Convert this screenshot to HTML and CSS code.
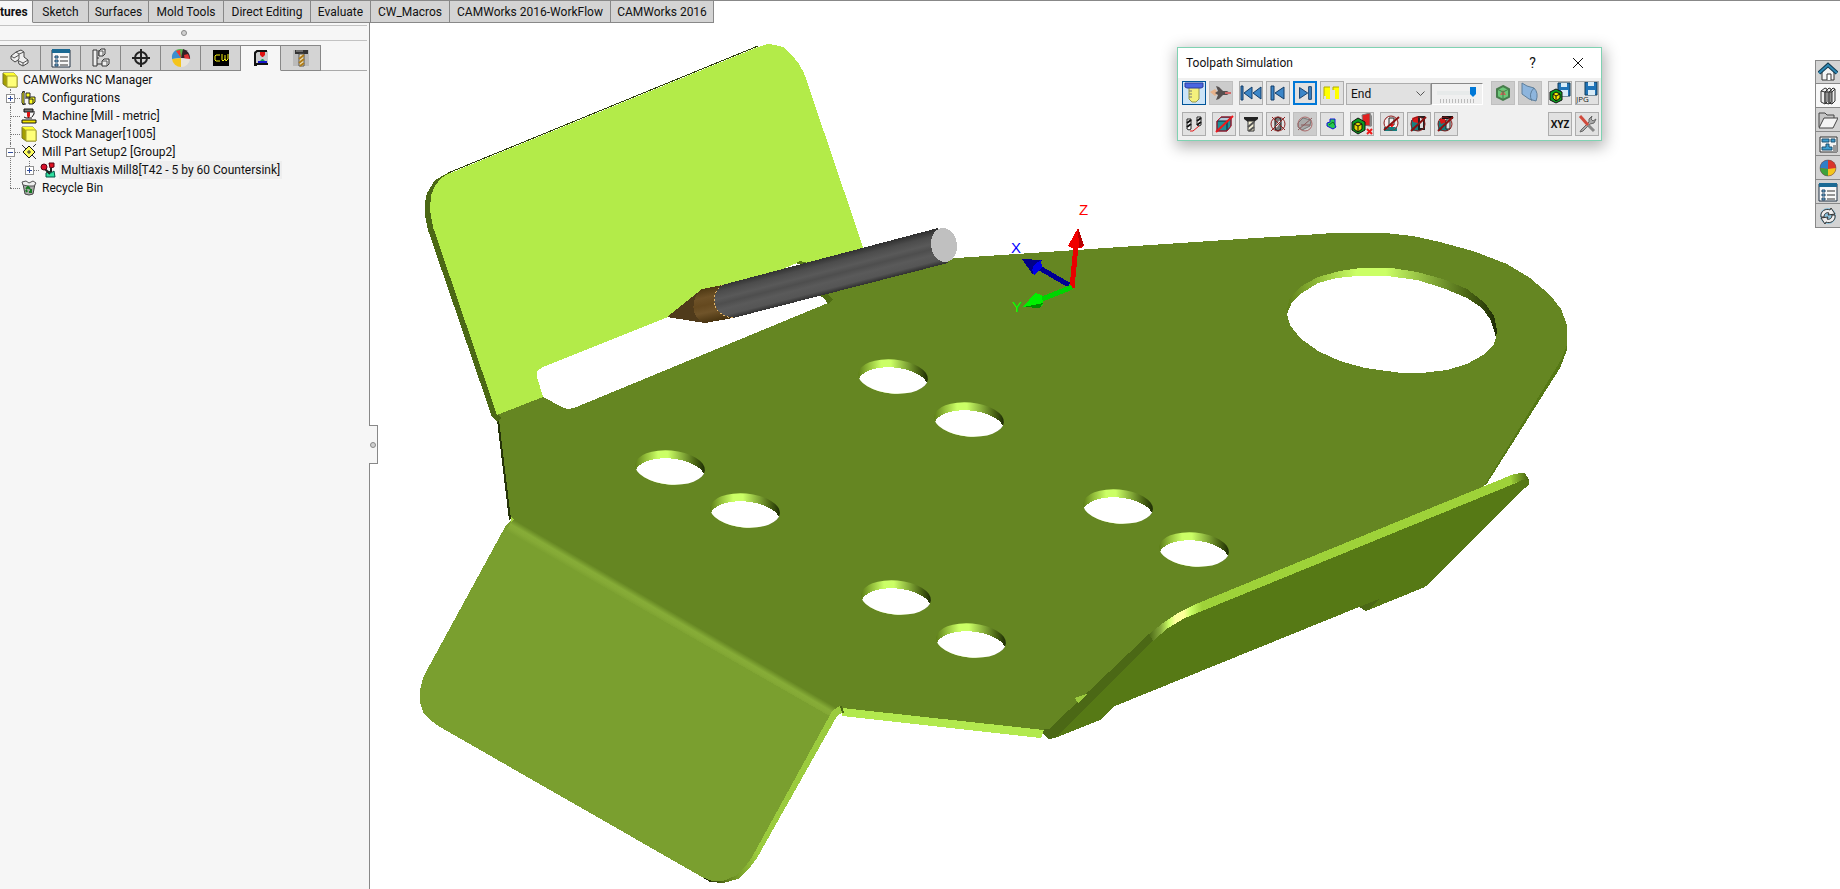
FILE: index.html
```html
<!DOCTYPE html>
<html lang="en">
<head>
<meta charset="utf-8">
<title>CAMWorks NC Manager</title>
<link rel="stylesheet" href="styles.css">
</head>
<body>
<div class="app">
  <nav class="ribbon" aria-label="Command tabs">
    <button class="ribbon-tab active">tures</button>
    <button class="ribbon-tab">Sketch</button>
    <button class="ribbon-tab">Surfaces</button>
    <button class="ribbon-tab">Mold Tools</button>
    <button class="ribbon-tab">Direct Editing</button>
    <button class="ribbon-tab">Evaluate</button>
    <button class="ribbon-tab">CW_Macros</button>
    <button class="ribbon-tab">CAMWorks 2016-WorkFlow</button>
    <button class="ribbon-tab">CAMWorks 2016</button>
  </nav>

  <div class="workspace">
    <aside class="manager">
      <div class="grip"><i class="dot"></i></div>
      <div class="manager-tabs">
        <button class="mtab" aria-label="Feature tree"><svg viewBox="0 0 20 20"><path d="M1 8 6 4 11 2 14 4V9L18 12V15L13 18 9 16 8 12 5 14 1 11Z" fill="#eee" stroke="#444"/><path d="M6 4 9 6V11L8 12M9 6 14 4M1 8 4 10 9 7M9 13 13 15 18 12M13 15V18" fill="none" stroke="#555"/></svg></button>
        <button class="mtab" aria-label="Properties"><svg viewBox="0 0 20 20"><path d="M1 2H19V19H1Z" fill="#f8f8f8" stroke="#234"/><path d="M1 1H19V5H1Z" fill="#1b6a94"/><path d="M4 8H7V10H4ZM4 12H7V14H4ZM4 16H7V18H4Z" fill="#7cc4e8" stroke="#246"/><path d="M9 9H17M9 13H17M9 17H17" stroke="#333"/></svg></button>
        <button class="mtab" aria-label="Configurations"><svg viewBox="0 0 20 20"><path d="M4 4V16H13M4 10H8M8 2V8" fill="none" stroke="#333"/><path d="M2 2H6V18H2ZM8 3 10 1H14V6L12 8H8ZM11 13 13 11H18V16L16 18H11Z" fill="#eee" stroke="#333"/><path d="M8 3H12V8M11 13H16V18" fill="none" stroke="#555"/></svg></button>
        <button class="mtab" aria-label="Dimensions"><svg viewBox="0 0 20 20"><circle cx="10" cy="10" r="6" fill="none" stroke="#222" stroke-width="2"/><path d="M10 1V19M1 10H19" stroke="#222" stroke-width="2"/></svg></button>
        <button class="mtab" aria-label="Display"><svg viewBox="0 0 20 20"><circle cx="10" cy="10" r="9" fill="#ddd"/><path d="M10 10 5 2A9 9 0 0 0 1 11Z" fill="#3a8fd0"/><path d="M10 10 5 2Q10 0 13 2Z" fill="#53b04a"/><path d="M10 10 12 1A9 9 0 0 1 19 11Z" fill="#332025"/><path d="M13 7 17 6 19 11 14 13Z" fill="#d33"/><path d="M10 10 19 11A9 9 0 0 1 10 19Z" fill="#e8e4dc"/><path d="M1 11 10 10V19A9 9 0 0 1 1 11Z" fill="#f4c41c"/><path d="M5 3 10 10 9 2Z" fill="#e33"/></svg></button>
        <button class="mtab" aria-label="CAMWorks feature tree"><svg viewBox="0 0 20 20"><path d="M2 2H18V18H2Z"/><path d="M9 7H5L4 8V12L5 13H9M11 6V12L12 13 14 11 15 13 17 11V6M14 7V12" fill="none" stroke="#f5ef10" stroke-width="1"/></svg></button>
        <button class="mtab active" aria-label="CAMWorks operation tree"><svg viewBox="0 0 20 20"><path d="M3 3H17V17H3Z" fill="#ccc"/><path d="M6 17H4V5L6 3H16M4 16H17" fill="none" stroke="#111" stroke-width="2"/><path d="M9 4H14V7L12 9H11L9 7Z" fill="#e01010"/><path d="M11 11H12L14 13H9Z" fill="#18a058"/><path d="M7 13H16V15H7Z" fill="#1414c8"/></svg></button>
        <button class="mtab" aria-label="CAMWorks tools"><svg viewBox="0 0 20 20"><path d="M2 2H18V18H2Z" fill="#bbb"/><path d="M4 2H17V6H4Z" fill="#333"/><path d="M5 3H12" stroke="#aaa"/><path d="M8 6H13V18H8Z" fill="#f0e6c0" stroke="#555"/><path d="M8 11 13 7M8 15 13 11M9 18 13 15" stroke="#b07b18" stroke-width="2"/></svg></button>
      </div>

      <div class="tree">
        <div class="row root"><svg class="ico" viewBox="0 0 16 16"><path d="M1 1H12L15 5V15H5L1 12Z" fill="#a5a000" stroke="#77752a"/><path d="M1 1H12L15 4H5Z" fill="#ffff30"/><path d="M5 4H15V15H5Z" fill="#ffff78" stroke="#a8a430"/></svg><span class="label">CAMWorks NC Manager</span></div>
        <ul>
          <li><div class="row"><button class="exp" aria-label="Expand Configurations"><svg viewBox="0 0 7 7"><path d="M1 3H6V4H1ZM3 1H4V6H3Z"/></svg></button><svg class="ico" viewBox="0 0 16 16"><path d="M2 1V15M2 2H4M2 14H5M4 8H9" fill="none" stroke="#111"/><path d="M1 3 3 1V15L1 13ZM5 3H9V7H5ZM8 8 10 7H14V12L12 14H8Z" fill="#ffff20" stroke="#222"/><path d="M8 9H12V14" fill="none" stroke="#222"/></svg><span class="label">Configurations</span></div></li>
          <li><div class="row"><svg class="ico" viewBox="0 0 16 16"><path d="M3 1H12V4H3Z" fill="#777" stroke="#111"/><path d="M6 4H9V8L8 10H7L6 8Z" fill="#e01010"/><path d="M13 3V6L11 9M3 9 5 10H11" fill="none" stroke="#111"/><path d="M1 12H15V15H1Z" fill="#f5e600" stroke="#111"/></svg><span class="label">Machine [Mill - metric]</span></div></li>
          <li><div class="row"><svg class="ico" viewBox="0 0 16 16"><path d="M1 1H12L15 5V15H5L1 12Z" fill="#a5a000" stroke="#77752a"/><path d="M1 1H12L15 4H5Z" fill="#ffff30"/><path d="M5 4H15V15H5Z" fill="#ffff78" stroke="#a8a430"/></svg><span class="label">Stock Manager[1005]</span></div></li>
          <li><div class="row"><button class="exp" aria-label="Collapse Mill Part Setup2"><svg viewBox="0 0 7 7"><path d="M1 3H6V4H1Z"/></svg></button><svg class="ico" viewBox="0 0 16 16"><path d="M8 2 14 8 8 14 2 8Z" fill="#ffff60" stroke="#111"/><path d="M1 1 5 5M11 11 15 15M12 3 15 0M8 6V10M6 8H10" stroke="#333"/></svg><span class="label">Mill Part Setup2 [Group2]</span></div>
            <ul>
              <li><div class="row"><button class="exp" aria-label="Expand Multiaxis Mill8"><svg viewBox="0 0 7 7"><path d="M1 3H6V4H1ZM3 1H4V6H3Z"/></svg></button><svg class="ico" viewBox="0 0 16 16"><path d="M6 11 9 9 11 11 14 9 15 15H6Z" fill="#30e0a0" stroke="#054"/><path d="M5 7 10 12M11 6V10" stroke="#222" stroke-width="2"/><circle cx="4" cy="5" r="3" fill="#d8102a" stroke="#501"/><path d="M9 1H14V5L10 6Z" fill="#e01020" stroke="#501"/></svg><span class="label selected">Multiaxis Mill8[T42 - 5 by 60 Countersink]</span></div></li>
            </ul>
          </li>
          <li><div class="row"><svg class="ico" viewBox="0 0 16 16"><path d="M2 4 14 4 12 14 8 15 4 14Z" fill="#aaa" stroke="#444"/><path d="M1 2 5 1 8 3 12 1 15 3 13 6 7 6 2 5Z" fill="#eee" stroke="#555"/><path d="M5 9 7 7 9 9M10 9V12H8M6 12 5 10" fill="none" stroke="#167a22" stroke-width="2"/></svg><span class="label">Recycle Bin</span></div></li>
        </ul>
      </div>
      <button class="splitter" aria-label="Collapse panel"><i class="dot"></i></button>
    </aside>

    <main class="viewport">
      <svg class="scene" viewBox="370 23 1470 866" preserveAspectRatio="xMinYMin meet" role="img" aria-label="Part model with countersink tool">
        <defs>
          <linearGradient id="rim" x1="0" x2="1"><stop offset="0" stop-color="#5d7e18"/><stop offset=".15" stop-color="#92bd3a"/><stop offset=".33" stop-color="#cbff66"/><stop offset=".47" stop-color="#cbff66"/><stop offset=".7" stop-color="#80a636"/><stop offset=".86" stop-color="#4a6414"/><stop offset="1" stop-color="#1d2b05"/></linearGradient>
          <linearGradient id="bend" gradientUnits="userSpaceOnUse" x1="513" y1="519" x2="506" y2="531"><stop offset="0" stop-color="#658622"/><stop offset=".4" stop-color="#86ac37"/><stop offset=".65" stop-color="#85aa36"/><stop offset="1" stop-color="#7a9f2f"/></linearGradient>
          <linearGradient id="shank" gradientUnits="userSpaceOnUse" x1="824" y1="257" x2="833" y2="292"><stop offset="0" stop-color="#2d2d2d"/><stop offset=".2" stop-color="#4c4c4c"/><stop offset=".4" stop-color="#595959"/><stop offset=".54" stop-color="#4e4e4e"/><stop offset=".7" stop-color="#5a5a5a"/><stop offset=".88" stop-color="#555"/><stop offset="1" stop-color="#333"/></linearGradient>
          <linearGradient id="brass" gradientUnits="userSpaceOnUse" x1="702" y1="287" x2="710" y2="323"><stop offset="0" stop-color="#47330f"/><stop offset=".3" stop-color="#6d5127"/><stop offset=".5" stop-color="#65491f"/><stop offset=".7" stop-color="#70542a"/><stop offset="1" stop-color="#45310e"/></linearGradient>
          <linearGradient id="lip" gradientUnits="userSpaceOnUse" x1="1149" y1="0" x2="1202" y2="0"><stop offset="0" stop-color="#4b6815"/><stop offset=".22" stop-color="#86aa3d"/><stop offset=".38" stop-color="#ccff66"/><stop offset=".5" stop-color="#ffffa0"/><stop offset=".66" stop-color="#ffff99"/><stop offset=".78" stop-color="#ccff66"/><stop offset="1" stop-color="#9ed239"/></linearGradient>
          <linearGradient id="tip" gradientUnits="userSpaceOnUse" x1="1510" y1="0" x2="1529" y2="0"><stop offset="0" stop-color="#9ed239"/><stop offset="1" stop-color="#46600f"/></linearGradient>
          <linearGradient id="flapedge" gradientUnits="userSpaceOnUse" x1="704" y1="0" x2="757" y2="0"><stop offset="0" stop-color="#172200"/><stop offset=".5" stop-color="#688a20"/><stop offset="1" stop-color="#9bcb3e"/></linearGradient>
          <clipPath id="rimclip"><ellipse cx="35" cy="17.500" rx="35" ry="17" transform="rotate(5 35 17.500)"/></clipPath>
          <g id="hole" clip-path="url(#rimclip)">
            <path d="M0 0H70V35H0Z" fill="url(#rim)"/>
            <ellipse cx="35" cy="25.500" rx="35" ry="17" transform="rotate(5 35 25.500)" fill="#fff"/>
          </g>
        </defs>

        <path d="M1482 486 1561 360 1567 345V350L1560 368 1486 485Z" fill="#567915"/>
        <path d="M497 413 543 392 680 340 797 300 820 262 957 258 1240 239 1320 234 1332 233H1385L1413 236 1440 242 1473 251 1507 264 1530 278 1550 295 1561 309 1567 325V345L1561 360 1482 489 1200 606 1153 638 1048 731 842 708 511 519 498 420Z" fill="#658622"/>
        <path d="M842 708 1044 730 1041 738 842 716Z" fill="#b2e94e"/>
        <path d="M497 420H499L511 519 509 520Z" fill="#253309"/>

        <path d="M497 422 492 417 428 230 425 215V203L427 193 435 180 448 173 455 176 438 230 498 414 501 418Z" fill="#4b6815"/>
        <path d="M497 415 433 227 430 210 431 195 435 186 441 178 448 174 758 47 768 44 775 45 783 47 792 55 799 64 804 73 863 247 850 262 797 264 668 317 543 367 537 371 543 397Z" fill="#b3eb49"/>
        <path d="M448 173 758 46" stroke="#2c3d0a" fill="none"/>
        <path d="M537 371 543 367 668 317 797 263 825 290 828 303 574 408 567 409 562 407 543 397 537 377Z" fill="#fff"/>
        <path d="M817 294 823 290 833 299 828 304 824 298Z" fill="#4f6d14"/>
        <path d="M796 263 800 261 808 263V268Z" fill="#567915"/>

        <path d="M511 520 505 527 427 670 423 678 420 690V702L423 712 430 720 440 727 702 877 712 881H723L735 876 745 867 752 857 830 715 833 710 840 706Z" fill="#7a9f2f"/>
        <path d="M513 519 840 706 833 718 506 531Z" fill="url(#bend)"/>
        <path d="M833 710 840 706 842 713 837 716 757 858 748 870 738 879 723 883 710 882 702 877 712 881H723L735 876 745 867 752 857 830 715Z" fill="url(#flapedge)"/>
        <path d="M841 706 843 713" stroke="#4b6815" stroke-width="2"/>
        <path d="M511 517V522L514 519Z" fill="#a1d13c"/>

        <path d="M1287 310 1290 297 1300 287 1318 277 1340 271 1360 268H1392L1417 272 1443 279 1467 289 1485 303 1494 316 1497 330 1496 338 1493 346 1483 355 1467 364 1447 370 1422 373H1402L1365 368 1340 361 1318 351 1300 338 1290 325Z" fill="url(#rim)"/>
        <path d="M1287 314 1292 302 1302 293 1318 283 1337 278 1357 276H1387L1417 280 1443 288 1467 298 1482 308 1490 319 1495 333 1496 338 1493 346 1483 355 1467 364 1447 370 1422 373H1402L1365 368 1340 361 1318 351 1300 338 1290 325Z" fill="#fff"/>
        <use href="#hole" x="858" y="359"/><use href="#hole" x="934" y="402"/>
        <use href="#hole" x="1083" y="489"/><use href="#hole" x="1159" y="532"/>
        <use href="#hole" x="861" y="580"/><use href="#hole" x="936" y="623"/>
        <use href="#hole" x="635" y="450"/><use href="#hole" x="710" y="493"/>

        <path d="M1153 641 1168 628 1185 618 1207 609 1516 483 1522 479 1529 480V484L1525 488 1425 587 1366 611 1359 607 1115 706 1100 720 1055 738 1048 739Z" fill="#567915"/>
        <path d="M1149 634 1163 623 1178 613 1196 604 1514 474 1522 473H1525L1529 480 1522 480 1516 483 1207 609 1185 618 1168 628 1153 641Z" fill="#9ed239"/>
        <path d="M1149 634 1163 623 1178 613 1196 604 1202 602V611L1185 618 1168 628 1153 641Z" fill="url(#lip)"/>
        <path d="M1510 476 1514 474 1522 473H1525L1529 480 1522 480 1513 484Z" fill="url(#tip)"/>
        <path d="M1149 634 1153 641 1055 738 1048 739 1043 733 1044 729H1049Z" fill="#4b6815"/>
        <path d="M1075 698 1089 693 1078 703Z" fill="#9bcb3e"/>
        <path d="M1359 607 1379 599 1370 609 1366 611Z" fill="#4b6815"/>

        <path d="M667 317 702 289 712 287 705 323Z" fill="#503b1b"/>
        <path d="M702 289 722 285 733 318 705 323C690 318 690 298 702 289Z" fill="url(#brass)"/>
        <path d="M722 285 938 228 948 263 733 318C712 316 709 295 722 285Z" fill="url(#shank)"/>
        <path d="M722 285C709 295 712 316 733 318" fill="none" stroke="#e2b56a" stroke-dasharray="2 2"/>
        <ellipse cx="944" cy="245" rx="13" ry="17" transform="rotate(-8 944 245)" fill="#c0c0c0"/>

        <path d="M1069 285 1036 266" stroke="#000094" stroke-width="5"/>
        <path d="M1022 259 1042 260 1033 275Z" fill="#000088"/><path d="M1034 265 1041 260 1042 267 1034 275 1032 270Z" fill="#0000e8"/>
        <path d="M1072 288 1076 245" stroke="#e80000" stroke-width="5"/>
        <path d="M1078 228 1084 245 1081 248 1075 249 1068 246Z" fill="#f00000"/><path d="M1078 228 1084 245 1079 248Z" fill="#b80000"/>
        <path d="M1072 287 1040 300" stroke="#00d400" stroke-width="5"/>
        <path d="M1023 307 1035 293 1042 295 1043 304 1040 308Z" fill="#00f000"/><path d="M1023 307 1043 303 1040 308Z" fill="#008e00"/>
        <text x="1079" y="215" class="axis" fill="#f00">Z</text>
        <text x="1011" y="253" class="axis" fill="#00f">X</text>
        <text x="1012" y="312" class="axis" fill="#0f0">Y</text>
      </svg>

      <section class="dialog" aria-label="Toolpath Simulation">
        <header class="titlebar">
          <h1>Toolpath Simulation</h1>
          <button class="caption" aria-label="Help">?</button>
          <button class="caption" aria-label="Close"><svg viewBox="0 0 12 12"><path d="M1 1 11 11M11 1 1 11" stroke="#111"/></svg></button>
        </header>
        <div class="toolrow">
          <div class="group">
            <button class="tool on" aria-label="Tool display"><svg viewBox="0 0 22 22"><path d="M6 5H16V17L13 20H9L6 17Z" fill="#f4f07c" stroke="#98984c"/><path d="M2 1H20V5L18 6H4L2 5Z" fill="#4a66e0" stroke="#2a3c9c"/><path d="M6 9H9M6 12H9M6 15H9" stroke="#777"/></svg></button>
            <button class="tool off" aria-label="Turbo mode"><svg viewBox="0 0 22 22"><path d="M0 10 5 7 8 11 5 14Z" fill="#e6b28b"/><path d="M6 4 9 5 13 9H17L20 11 17 13H13L9 17 6 18 8 13 5 11 8 9Z" fill="#565050"/><path d="M15 11H21" stroke="#d26a6a" stroke-width="2"/></svg></button>
          </div>
          <div class="group">
            <button class="tool" aria-label="Rewind"><svg viewBox="0 0 22 22"><path d="M1 4H3V18H1ZM12 5V17L4 11ZM21 5V17L13 11Z" fill="#3c86c8" stroke="#123c68"/></svg></button>
            <button class="tool" aria-label="Step back"><svg viewBox="0 0 22 22"><path d="M4 4H7V18H4ZM17 5V17L8 11Z" fill="#3c86c8" stroke="#123c68"/></svg></button>
            <button class="tool focus" aria-label="Go to end"><svg viewBox="0 0 22 22"><path d="M15 4H18V18H15ZM5 5V17L14 11Z" fill="#3c86c8" stroke="#123c68"/></svg></button>
            <button class="tool" aria-label="Pause"><svg viewBox="0 0 22 22"><path d="M3 5H9V17H3ZM12 5H18V17H12Z" fill="#ff0"/><path d="M3 17V5H9M12 8V5H18" fill="none" stroke="#b0aa00"/><path d="M3 14H5V17H3ZM12 8H14V17H12Z" fill="#e1e1e1"/></svg></button>
          </div>
          <select class="mode" aria-label="Simulate to"><option>End</option></select>
          <label class="speed"><input type="range" min="0" max="10" value="10" aria-label="Speed"><i class="ticks"></i></label>
          <div class="group end">
            <button class="tool off" aria-label="Compare"><svg viewBox="0 0 22 22"><path d="M11 4 17 7V15L11 18 5 15V7Z" fill="#6cc878" stroke="#477d4c" stroke-width="2"/><path d="M11 8 14 13H8Z" fill="#cf6258"/><path d="M5 7 11 10 17 7M11 10V18" fill="none" stroke="#477d4c"/></svg></button>
            <button class="tool off" aria-label="Section view"><svg viewBox="0 0 22 22"><path d="M3 1 8 4 15 6Q20 11 17 19L10 17 3 12Z" fill="#8db5dd" stroke="#5e7f9c"/><path d="M15 6Q9 12 13 19" fill="none" stroke="#5e7f9c"/></svg></button>
          </div>
          <div class="group">
            <button class="tool" aria-label="Save stock"><svg viewBox="0 0 22 22"><path d="M9 1H21V14H9Z" fill="#2074b8" stroke="#123c58"/><path d="M12 1H18V5H12ZM12 8H19V14H12Z" fill="#d7ebf7"/><path d="M7 7 13 10V18L7 21 1 18V10Z" fill="#0aa01e" stroke="#111"/><path d="M7 10 11 12V16L7 19 4 16V12Z" fill="#f5e800" stroke="#111"/><path d="M7 14V19M4 12 7 14 11 12" stroke="#111" fill="none"/></svg></button>
            <button class="tool" aria-label="Save as JPG"><svg viewBox="0 0 22 22"><path d="M9 0H21V13H9Z" fill="#2074b8" stroke="#123c58"/><path d="M12 0H18V4H12ZM12 8H19V13H12Z" fill="#d7ebf7"/><text x="0" y="20" class="jpg">JPG</text></svg></button>
          </div>
        </div>
        <div class="toolrow">
          <div class="group">
            <button class="tool" aria-label="Show toolpath"><svg viewBox="0 0 22 22"><path d="M4 6H8V16L6 17 4 16ZM14 4H18V12L16 13 14 12Z" fill="#fff" stroke="#222"/><path d="M4 10 8 7M4 14 8 11M14 8 18 5M14 12 18 9" stroke="#111" stroke-width="2"/><path d="M7 18H10L16 13" fill="none" stroke="#e01818"/></svg></button>
          </div>
          <div class="group">
            <button class="tool" aria-label="Hide stock"><svg viewBox="0 0 22 22"><path d="M4 8 8 4H18V13L14 18H4Z" fill="#1b9098" stroke="#0c2430"/><path d="M5 8 8 5H17L14 8Z" fill="#b8c8d8"/><path d="M4 8H14V18M14 8 18 4" fill="none" stroke="#123"/><path d="M3 19 20 3" stroke="#f01818" stroke-width="2"/><path d="M4 8 8 4H18V13L14 18H4Z" fill="none" stroke="#c81830"/></svg></button>
            <button class="tool" aria-label="Tool shading"><svg viewBox="0 0 22 22"><path d="M4 4H18V6L14 9H8L4 6Z" fill="#222"/><path d="M8 8H14V18H8Z" fill="#f6f2d8" stroke="#333"/><path d="M8 14 14 9M9 18 14 14" stroke="#555" stroke-width="2"/></svg></button>
            <button class="tool" aria-label="Hide holder"><svg viewBox="0 0 22 22"><path d="M8 6 11 4 14 6V16L11 18 8 16Z" fill="#777" stroke="#111"/><path d="M9 14 13 8" stroke="#eee" stroke-width="2"/><circle cx="11" cy="11" r="7" fill="none" stroke="#8f2020"/><path d="M4 18 18 4M5 4 18 17" stroke="#8f2020"/></svg></button>
            <button class="tool off" aria-label="Hide fixture"><svg viewBox="0 0 22 22"><path d="M4 10 9 5 17 7 16 13 8 17 4 14Z" fill="#aaa" stroke="#777"/><circle cx="11" cy="11" r="7" fill="none" stroke="#a96868"/><path d="M4 17 18 5M7 12H16" stroke="#8a5c5c"/></svg></button>
            <button class="tool" aria-label="Collision"><svg viewBox="0 0 22 22"><path d="M9 6H14V12L15 14 12 16 6 13V10L9 9Z" fill="#28c850" stroke="#1212d8"/><path d="M8 12 12 9 14 12" fill="none" stroke="#0a6a20"/></svg></button>
          </div>
          <div class="group">
            <button class="tool" aria-label="Difference"><svg viewBox="0 0 22 22"><path d="M11 2 19 0V13L12 12Z" fill="#e02020" stroke="#777"/><path d="M19 0 21 3V13L19 14Z" fill="#888"/><path d="M7 5 14 9V17L7 21 1 17V9Z" fill="#0a9a1e" stroke="#111"/><path d="M7 9 11 11V16L7 19 3 16V11Z" fill="#e4d800" stroke="#111"/><path d="M7 13V19M3 11 7 13 11 11" stroke="#111" fill="none"/><path d="M16 16 21 21M21 16 16 21" stroke="#f01818" stroke-width="2"/></svg></button>
          </div>
          <div class="group">
            <button class="tool" aria-label="Hide tool collisions"><svg viewBox="0 0 22 22"><path d="M3 14H16V18H3Z" fill="#158080"/><circle cx="10" cy="10" r="7" fill="#f4eeee" stroke="#8b1818"/><path d="M8 5H13V12H8Z" fill="#eee" stroke="#222"/><path d="M8 11H13L11 15Z" fill="#e11"/><path d="M5 14H15L12 17H8Z" fill="#158080"/><path d="M3 17 18 4" stroke="#8b1010" stroke-width="2"/></svg></button>
            <button class="tool" aria-label="Hide shank collisions"><svg viewBox="0 0 22 22"><path d="M3 7H12V18H3Z" fill="#158080"/><path d="M4 5 10 3 13 6 10 10 5 9Z" fill="#d81818"/><path d="M11 4H16V16H11Z" fill="#ddd" stroke="#222" stroke-width="2"/><circle cx="10" cy="11" r="7" fill="none" stroke="#8b1818"/><path d="M3 18 18 4" stroke="#8b1010" stroke-width="2"/></svg></button>
            <button class="tool" aria-label="Hide holder collisions"><svg viewBox="0 0 22 22"><path d="M3 8H13V18H3Z" fill="#158080"/><path d="M4 6 9 5 12 9 6 11Z" fill="#d81818"/><path d="M7 3H18V6H7Z" fill="#111"/><path d="M11 7H15V16H11Z" fill="#ddd" stroke="#222"/><circle cx="10" cy="11" r="7" fill="none" stroke="#8b1818"/><path d="M3 18 18 4" stroke="#8b1010" stroke-width="2"/></svg></button>
          </div>
          <div class="group end">
            <button class="tool xyz">XYZ</button>
            <button class="tool" aria-label="Options"><svg viewBox="0 0 22 22"><path d="M16 3 13 6V9L5 17 4 19 7 18 14 11 18 10 20 6 17 8 15 6Z" fill="#aaa" stroke="#666"/><path d="M12 12 18 18" stroke="#888" stroke-width="3"/><path d="M4 3 12 12" stroke="#d04a3c" stroke-width="3"/></svg></button>
          </div>
        </div>
      </section>

      <nav class="taskpane" aria-label="Task pane">
        <button aria-label="Resources"><svg viewBox="0 0 20 20"><path d="M4 9V18H16V9L10 4Z" fill="#f4f4f4" stroke="#333"/><path d="M1 11 10 3 19 11" fill="none" stroke="#123a50" stroke-width="4"/><path d="M1 11 10 3 19 11" fill="none" stroke="#2f88b4" stroke-width="2"/><path d="M9 18V12H13V18" fill="#fff" stroke="#333"/></svg></button>
        <button class="active" aria-label="Design library"><svg viewBox="0 0 20 20"><path d="M3 5 7 2 9 3V16L7 18 3 16ZM7 6 11 2 13 3V16L11 18 7 17ZM11 6 15 2 17 3V15L14 18 11 17Z" fill="#eee" stroke="#333"/><path d="M3 5 7 6V18M7 6 11 6V18M11 6 14 6V18M14 6 17 3" fill="none" stroke="#333"/></svg></button>
        <button aria-label="File explorer"><svg viewBox="0 0 20 20"><path d="M1 17V3H7L9 5H16V8" fill="#c6c6c6" stroke="#444"/><path d="M1 18 6 8H20L15 18Z" fill="#f4f4f4" stroke="#444"/></svg></button>
        <button aria-label="View palette"><svg viewBox="0 0 20 20"><path d="M2 3H19V18H2Z" fill="#f4f4f4" stroke="#333"/><path d="M4 5H11V8H4ZM13 5H17V8H13ZM8 10H11V13H14V16H4V13H8Z" fill="#3f9fd0" stroke="#1c4f6e"/><path d="M15 11H19V18H15Z" fill="#999"/></svg></button>
        <button aria-label="Appearances"><svg viewBox="0 0 20 20"><circle cx="10" cy="10" r="8" fill="#e33"/><path d="M10 2A8 8 0 0 0 2 10L10 11Z" fill="#2f7fc8"/><path d="M10 2A8 8 0 0 1 18 10L10 11Z" fill="#d9362b"/><path d="M18 10A8 8 0 0 1 10 18V11Z" fill="#f3c51d"/><path d="M2 10A8 8 0 0 0 10 18V11Z" fill="#3ea33a"/><circle cx="10" cy="10" r="8" fill="none" stroke="#555" stroke-opacity=".5"/></svg></button>
        <button aria-label="Custom properties"><svg viewBox="0 0 20 20"><path d="M1 2H19V19H1Z" fill="#f8f8f8" stroke="#234"/><path d="M1 1H19V5H1Z" fill="#1b6a94"/><path d="M4 8H7V10H4ZM4 12H7V14H4ZM4 16H7V18H4Z" fill="#7cc4e8" stroke="#246"/><path d="M9 9H17M9 13H17M9 17H17" stroke="#333"/></svg></button>
        <button aria-label="Forum"><svg viewBox="0 0 20 20"><circle cx="10" cy="10" r="8" fill="#8cc4de"/><path d="M3 11C2 5 8 2 12 4L13 2 17 8 10 9 11 7C8 6 6 8 6 11ZM17 9C18 15 12 18 8 16L7 18 3 12 10 11 9 13C12 14 14 12 14 9Z" fill="#eee" stroke="#333"/></svg></button>
      </nav>
    </main>
  </div>
</div>
</body>
</html>
```
FILE: styles.css
```css
* { box-sizing: border-box; }
body { margin: 0; background: #fff; color: #111; font: 12px/18px Roboto, "Open Sans", sans-serif; }
button { font: inherit; color: inherit; padding: 0; border: 0; background: none; }
svg { display: block; }

.app { display: flex; flex-direction: column; height: 100vh; overflow: hidden; border-top: 1px solid #888; }

/* command tabs */
.ribbon { display: grid; grid-template-columns: 33px 56px 60px 75px 87px 60px 79px 161px 103px; height: 22px; }
.ribbon-tab { border-right: 1px solid #888; border-bottom: 1px solid #888; background: #d4d4d4; white-space: nowrap; }
.ribbon-tab.active { padding-right: 7px; text-align: right; background: #f6f6f6; border-bottom-color: #f6f6f6; font-weight: 700; }

.workspace { display: flex; flex: 1; min-height: 0; }

/* manager panel */
.manager { position: relative; z-index: 1; width: 370px; border-right: 1px solid #888; background: #f6f6f6; }
.grip { display: flex; align-items: center; justify-content: center; height: 16px; margin: 2px 2px 0 0; border-top: 1px solid #c2c2c2; border-bottom: 1px solid #c2c2c2; }
.dot { width: 6px; height: 6px; border: 1px solid #888; border-radius: 50%; background: #d0d0d0; }
.manager-tabs { display: flex; height: 26px; margin: 4px 2px 0 0; border-bottom: 1px solid #aaa; }
.mtab { display: flex; align-items: center; justify-content: center; width: 40px; height: 26px; border: solid #888; border-width: 1px 1px 1px 0; background: #d4d4d4; }
.mtab.active { background: #f6f6f6; border-bottom-color: #f6f6f6; }
.mtab:first-child { width: 41px; }
.mtab svg { width: 20px; height: 20px; }

/* operation tree */
.tree ul { list-style: none; margin: 0; padding: 0; }
.tree li { position: relative; }
.tree ul ul { margin-left: 19px; }
.row { display: flex; align-items: center; gap: 3px; height: 18px; padding-left: 21px; }
.row.root { padding-left: 2px; }
.ico { width: 16px; height: 16px; flex: none; }
.label { padding: 0 2px; white-space: nowrap; }
.label.selected { background: #eee; }
.tree li::before { content: ""; position: absolute; left: 10px; top: 0; height: 100%; border-left: 1px dotted #777; }
.tree li:last-child::before { height: 9px; }
.tree li::after { content: ""; position: absolute; left: 10px; top: 9px; width: 10px; border-top: 1px dotted #777; }
.exp { position: absolute; z-index: 1; left: 6px; top: 5px; width: 9px; height: 9px; border: 1px solid #919191; background: #fff; }
.exp svg { width: 7px; height: 7px; fill: #304c9c; }

.splitter { position: absolute; right: -9px; top: 402px; width: 9px; height: 39px; border: 1px solid #888; border-left: 0; background: #f6f6f6; display: flex; align-items: center; justify-content: center; }

/* graphics area */
.viewport { position: relative; flex: 1; min-width: 0; }
.scene { width: 100%; height: 100%; shape-rendering: crispEdges; }
.axis { font: 15px "Liberation Sans", sans-serif; }

/* floating dialog */
.dialog { position: absolute; top: 24px; right: 238px; width: 425px; height: 94px; border: 1px solid #80d2b2; background: #f0f0f0; box-shadow: 1px 4px 14px 2px rgba(0, 0, 0, .3); }
.titlebar { display: flex; align-items: center; height: 30px; padding: 0 1px 0 8px; background: #fff; }
.titlebar h1 { flex: 1; margin: 0; font-size: 12px; font-weight: 400; }
.caption { display: flex; align-items: center; justify-content: center; width: 45px; height: 28px; font-size: 14px; }
.caption svg { width: 12px; height: 12px; }
.toolrow { display: flex; gap: 6px; height: 24px; margin: 3px 2px 7px 4px; }
.group { display: flex; gap: 3px; }
.group.end { margin-left: auto; }
.tool { width: 24px; height: 24px; border: 1px solid #adadad; background: #e1e1e1; }
.tool svg { width: 22px; height: 22px; }
.tool.on { background: #cce4f7; border-color: #005499; }
.tool.off { background: #ccc; border-color: #bfbfbf; }
.tool.focus { border: 2px solid #0078d7; }
.tool.focus svg { width: 20px; height: 20px; }
.tool.xyz { font: 700 10px/22px "Open Sans", sans-serif; }
.jpg { font: 8px "Open Sans", sans-serif; fill: #222; }
.mode { width: 85px; height: 22px; margin: 2px -6px 0 -4px; padding: 0 0 0 4px; border: 1px solid #adadad; border-radius: 0; color: #111; font: inherit; appearance: none; background: #e1e1e1 url("data:image/svg+xml,%3Csvg xmlns='http://www.w3.org/2000/svg' width='9' height='6'%3E%3Cpath d='M0.500 0.500 4.500 4.500 8.500 0.500' fill='none' stroke='%23555'/%3E%3C/svg%3E") no-repeat right 5px center; }
.speed { display: flex; flex-direction: column; width: 52px; height: 22px; margin-top: 2px; padding: 3px 6px 0 5px; border: 1px solid #fff; border-top-color: #888; border-left-color: #888; }
.speed input { appearance: none; width: 39px; height: 10px; margin: 0; background: linear-gradient(#e7eaea, #e7eaea) 0 4px / 100% 4px no-repeat; border-radius: 0; }
.speed input::-webkit-slider-thumb { appearance: none; width: 6px; height: 10px; background: #0078d7; clip-path: polygon(0 0, 100% 0, 100% 70%, 50% 100%, 0 70%); }
.ticks { width: 35px; height: 4px; margin: 2px 0 0 3px; background: repeating-linear-gradient(90deg, #bbb 0 1px, transparent 1px 3px); }

/* task pane */
.taskpane { position: absolute; top: 37px; right: 0; display: flex; flex-direction: column; width: 25px; border: 1px solid #888; border-right: 0; }
.taskpane button { display: flex; align-items: center; justify-content: center; height: 24px; border-bottom: 1px solid #888; background: #d4d4d4; }
.taskpane button:first-child { height: 23px; }
.taskpane button:last-child { border-bottom: 0; height: 23px; }
.taskpane .active { background: #f8f8f8; }
.taskpane svg { width: 20px; height: 20px; }
```
